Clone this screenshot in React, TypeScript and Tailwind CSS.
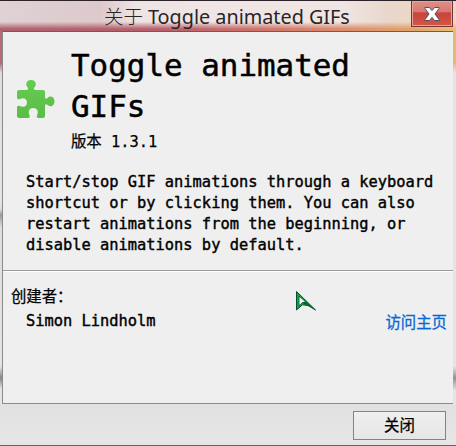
import React from "react";

const mono = "font-['DejaVu_Sans_Mono','Noto_Sans_CJK_SC',monospace]";
const stroke = "[-webkit-text-stroke:0.4px_currentColor]";

function PuzzleIcon() {
  return (
    <svg width="38" height="38" viewBox="0 0 38 38" className="block shrink-0">
      <defs>
        <linearGradient id="leaf" x1="0" y1="0" x2="0" y2="1">
          <stop offset="0" stopColor="#66cc52" />
          <stop offset="1" stopColor="#5abd46" />
        </linearGradient>
      </defs>
      <path
        fill="url(#leaf)"
        d="M2 10H9C11.500 10 11.800 8.600 10.300 7C9.600 6.200 9.200 5.300 9.200 4.200C9.200 1.500 11.300 0 14 0C16.700 0 18.800 1.500 18.800 4.200C18.800 5.300 18.400 6.200 17.700 7C16.200 8.600 16.500 10 19 10H26Q28 10 28 12V17C28 19 29.300 19.200 30.600 17.900C33.500 14.800 37.500 17 37.500 21.300C37.500 25.600 33.500 28 30.600 25C29.300 23.700 28 24 28 26V36Q28 38 26 38H21.500C19.800 38 19.500 36.500 20.200 35C21.800 31.200 20 28 16.300 28C12.500 28 10.800 31.200 12.400 35C13.100 36.500 12.800 38 11 38H2Q0 38 0 36V28C0 25.600 1.200 25.200 2.800 26C6.800 28 10 26 10 22.400C10 19 6.800 17 2.800 19C1.200 19.800 0 19.200 0 17V12Q0 10 2 10Z"
      />
    </svg>
  );
}

function TitleBar() {
  return (
    <header className="relative flex h-[31px] shrink-0 justify-end border-t border-[#2b2329] bg-[linear-gradient(90deg,#b05f6e_0%,#b85f6c_35%,#cc7169_55%,#dc8b6c_75%,#e3a568_92%,#edbc75_100%)] pr-[3px]">
      <div className="absolute inset-x-0 top-0 h-[28px] bg-[linear-gradient(90deg,#dfd2d4_0%,#dcc9cb_22%,#eee4e4_30%,#efe6e4_75%,#e9d7cc_85%,#efd9bd_100%)] [mask-image:linear-gradient(#000_74%,transparent)]" />
      <h1 className="absolute left-[104px] top-[3px] flex items-baseline whitespace-nowrap font-['Noto_Sans','Noto_Sans_CJK_SC',sans-serif] text-[19.8px] leading-[24px] text-[#292426]">
        <span className="mr-[5px] w-[39px] font-['Noto_Sans_CJK_SC',sans-serif] text-[19.5px] font-light">关于</span>
        <span>Toggle animated GIFs</span>
      </h1>
      <button aria-label="Close" className="relative flex h-[26px] w-[42px] items-center justify-center border border-t-0 border-[#70343a] bg-[linear-gradient(#de9089_0%,#d97872_42%,#c6453d_48%,#d65644_100%)] shadow-[inset_0_0_0_1px_#e9a499]">
        <svg width="16" height="14" viewBox="0 0 16 14">
          <path d="M1 .5h4.500L8 3.600 10.500.5H15v1L11 7l4 5.500v1h-4.500L8 10.400 5.500 13.500H1v-1L5 7 1 1.500Z" fill="#fff" stroke="#4a5365" strokeWidth="1" />
        </svg>
      </button>
    </header>
  );
}

export default function App() {
  return (
    <div className={`flex h-[446px] w-[456px] flex-col overflow-hidden border-b border-[#646464] bg-[#e4e4e4] text-[15.39px] text-black ${mono}`}>
      <TitleBar />
      <div className="flex h-[373px] shrink-0 bg-[linear-gradient(#b86876_0px,#b86876_32px,#dedede_42px,#e5e5e5_170px,#dedede_178px,#99979b_184px,#dedede_196px,#e4e4e4_335px,#858585_347px,#e4e4e4_358px)]">
        <main className="ml-[2px] flex w-[451px] flex-col border border-r-0 border-[#8b8b8b] border-t-[#805453] bg-[#efefef]">
          <section className="h-[239px] border-b border-[#999] pl-[14px]">
            <div className="flex">
              <div className="pt-[48px]"><PuzzleIcon /></div>
              <div className="pl-[16px] pt-[13px]">
                <h2 className="text-[30.9px] leading-[41px] [-webkit-text-stroke:0.5px_currentColor]">Toggle animated<br />GIFs</h2>
                <p className="mt-[5px] leading-[20px] [-webkit-text-stroke:0.25px_currentColor]">版本 1.3.1</p>
              </div>
            </div>
            <p className={`ml-[9px] mt-[20px] whitespace-nowrap leading-[21px] ${stroke}`}>
              Start/stop GIF animations through a keyboard<br />
              shortcut or by clicking them. You can also<br />
              restart animations from the beginning, or<br />
              disable animations by default.
            </p>
          </section>
          <section className="flex-1 border-t border-white pl-[8px] pr-[6px] pt-[14px]">
            <p className="leading-[22px] [-webkit-text-stroke:0.25px_currentColor]">创建者：</p>
            <div className="flex justify-between pl-[15px] leading-[26px]">
              <span className={stroke}>Simon Lindholm</span>
              <a className="pt-[2px] text-[#0868d2] [-webkit-text-stroke:0.3px_currentColor]">访问主页</a>
            </div>
          </section>
        </main>
        <div className="w-[3px] bg-[linear-gradient(#e8b776_0px,#e8b776_32px,#e5e5e5_42px,#e5e5e5_335px,#909494_347px,#e5e5e5_360px)]" />
      </div>
      <footer className="flex h-[41px] shrink-0 justify-end bg-[linear-gradient(#e1e1e1,#e6e6e6)] pr-[10px] pt-[7px]">
        <button className="h-[29px] w-[93px] border border-solid border-[#3c94e8] bg-[linear-gradient(#efefef,#e6e6e6)] text-[15.4px] leading-[26px] [-webkit-text-stroke:0.25px_#000]">关闭</button>
      </footer>
      <svg className="absolute left-[295px] top-[290px]" width="22" height="22" viewBox="0 0 22 22">
        <path fillRule="evenodd" d="M1.500 1.500V20L7.500 14.800L13 15.500L20.500 20ZM4.300 6.500L10.500 12L7.500 12.300L4.300 15.500Z" fill="#12a13e" stroke="#064d34" />
        <path d="M7.500 13L10.500 12L17 17L12 15Z" fill="#075c2c" />
        <path d="M4.500 6.900L10 11.800L7.300 12.100L4.500 15Z" fill="#f5f5f5" />
      </svg>
    </div>
  );
}
